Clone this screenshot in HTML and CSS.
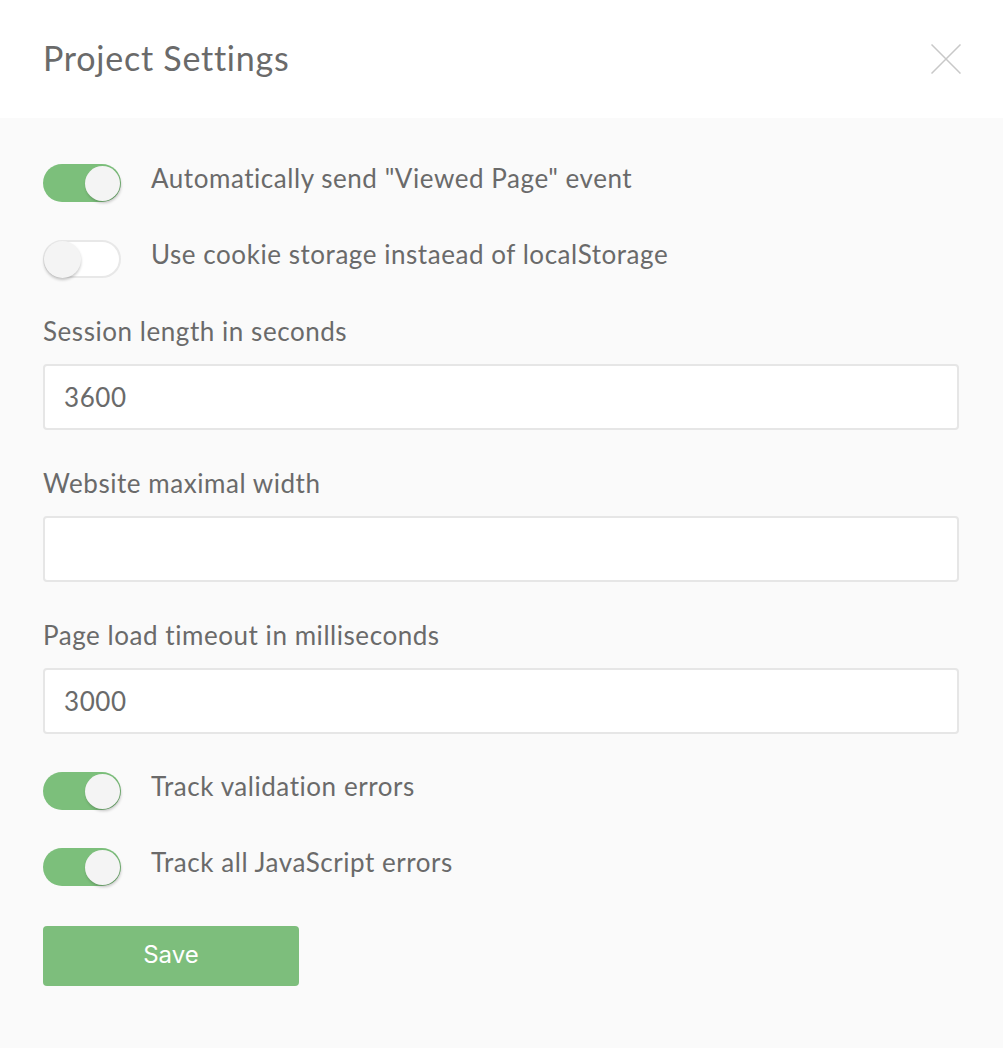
FILE: index.html
```html
<!DOCTYPE html>
<html>
<head>
<meta charset="utf-8">
<link rel="stylesheet" href="styles.css">
</head>
<body>
<div class="modal">
  <header class="modal-header">
    <h1 class="modal-title">Project Settings</h1>
    <button class="close-btn" aria-label="Close">
      <svg width="30" height="30" viewBox="0 0 30 30"><path d="M0.5 0.5 L29.5 29.5 M29.5 0.5 L0.5 29.5" stroke="#c8c8c8" stroke-width="1.5" fill="none"/></svg>
    </button>
  </header>
  <div class="modal-body">
    <div class="toggle-row">
      <span class="toggle on"><span class="knob"></span></span>
      <span class="toggle-label">Automatically send "Viewed Page" event</span>
    </div>
    <div class="toggle-row">
      <span class="toggle"><span class="knob"></span></span>
      <span class="toggle-label">Use cookie storage instaead of localStorage</span>
    </div>
    <div class="field">
      <label class="field-label">Session length in seconds</label>
      <input class="field-input" type="text" value="3600">
    </div>
    <div class="field">
      <label class="field-label">Website maximal width</label>
      <input class="field-input" type="text" value="">
    </div>
    <div class="field">
      <label class="field-label">Page load timeout in milliseconds</label>
      <input class="field-input" type="text" value="3000">
    </div>
    <div class="toggle-row">
      <span class="toggle on"><span class="knob"></span></span>
      <span class="toggle-label">Track validation errors</span>
    </div>
    <div class="toggle-row">
      <span class="toggle on"><span class="knob"></span></span>
      <span class="toggle-label">Track all JavaScript errors</span>
    </div>
    <div class="actions">
      <button class="save-btn">Save</button>
    </div>
  </div>
</div>
</body>
</html>
```
FILE: styles.css
```css
* { box-sizing: border-box; }
html, body { margin: 0; padding: 0; }
body {
  background: #fafafa;
  font-family: "Lato", "Open Sans", sans-serif;
  color: #6a6a6a;
}
.modal { width: 1003px; min-height: 1048px; background: #fafafa; }
.modal-header {
  height: 118px;
  background: #ffffff;
  display: flex;
  align-items: center;
  justify-content: space-between;
  padding: 0 42px 2px 43px;
}
.modal-title {
  margin: 0;
  font-size: 34px;
  line-height: 1.2;
  font-weight: 400;
  color: #6a6a6a;
  letter-spacing: 0.75px;
}
.close-btn {
  border: 0;
  background: transparent;
  padding: 0;
  width: 30px;
  height: 30px;
  display: flex;
  margin-top: 2px;
}
.modal-body {
  padding: 46px 44px 40px 43px;
  display: flex;
  flex-direction: column;
  gap: 38px;
}
.toggle-row {
  display: flex;
  align-items: flex-start;
  gap: 30px;
  height: 38px;
}
.toggle {
  position: relative;
  width: 78px;
  height: 38px;
  border-radius: 19px;
  background: #ffffff;
  border: 2px solid #e8e8e8;
  flex: none;
}
.toggle.on { background: #7cbf7b; border: 0; }
.knob {
  position: absolute;
  top: -1px;
  left: -1px;
  width: 37px;
  height: 37px;
  border-radius: 50%;
  background: #f4f4f4;
  box-shadow: 0 2px 3px rgba(0,0,0,0.22);
}
.toggle.on .knob { top: 1.5px; left: auto; right: 1.5px; width: 35px; height: 35px; box-shadow: 1px 2px 3px rgba(0,0,0,0.22); }
.toggle-label { font-size: 26px; line-height: 29px; letter-spacing: 0.55px; }
.field { display: flex; flex-direction: column; gap: 18px; }
.field-label { font-size: 26px; line-height: 30px; letter-spacing: 0.55px; }
.field-input {
  width: 916px;
  height: 66px;
  border: 2px solid #e6e6e6;
  border-radius: 4px;
  background: #ffffff;
  padding: 0 19px;
  font-family: inherit;
  font-size: 26px;
  letter-spacing: 0.55px;
  color: #6a6a6a;
  outline: none;
}
.actions { padding-top: 2px; }
.save-btn {
  width: 256px;
  height: 60px;
  border: 0;
  border-radius: 4px;
  background: #7dbe7c;
  color: #ffffff;
  font-family: "Inter", "Roboto", sans-serif;
  font-size: 24px;
  font-weight: 400;
  padding: 0 0 4px;
}
```
